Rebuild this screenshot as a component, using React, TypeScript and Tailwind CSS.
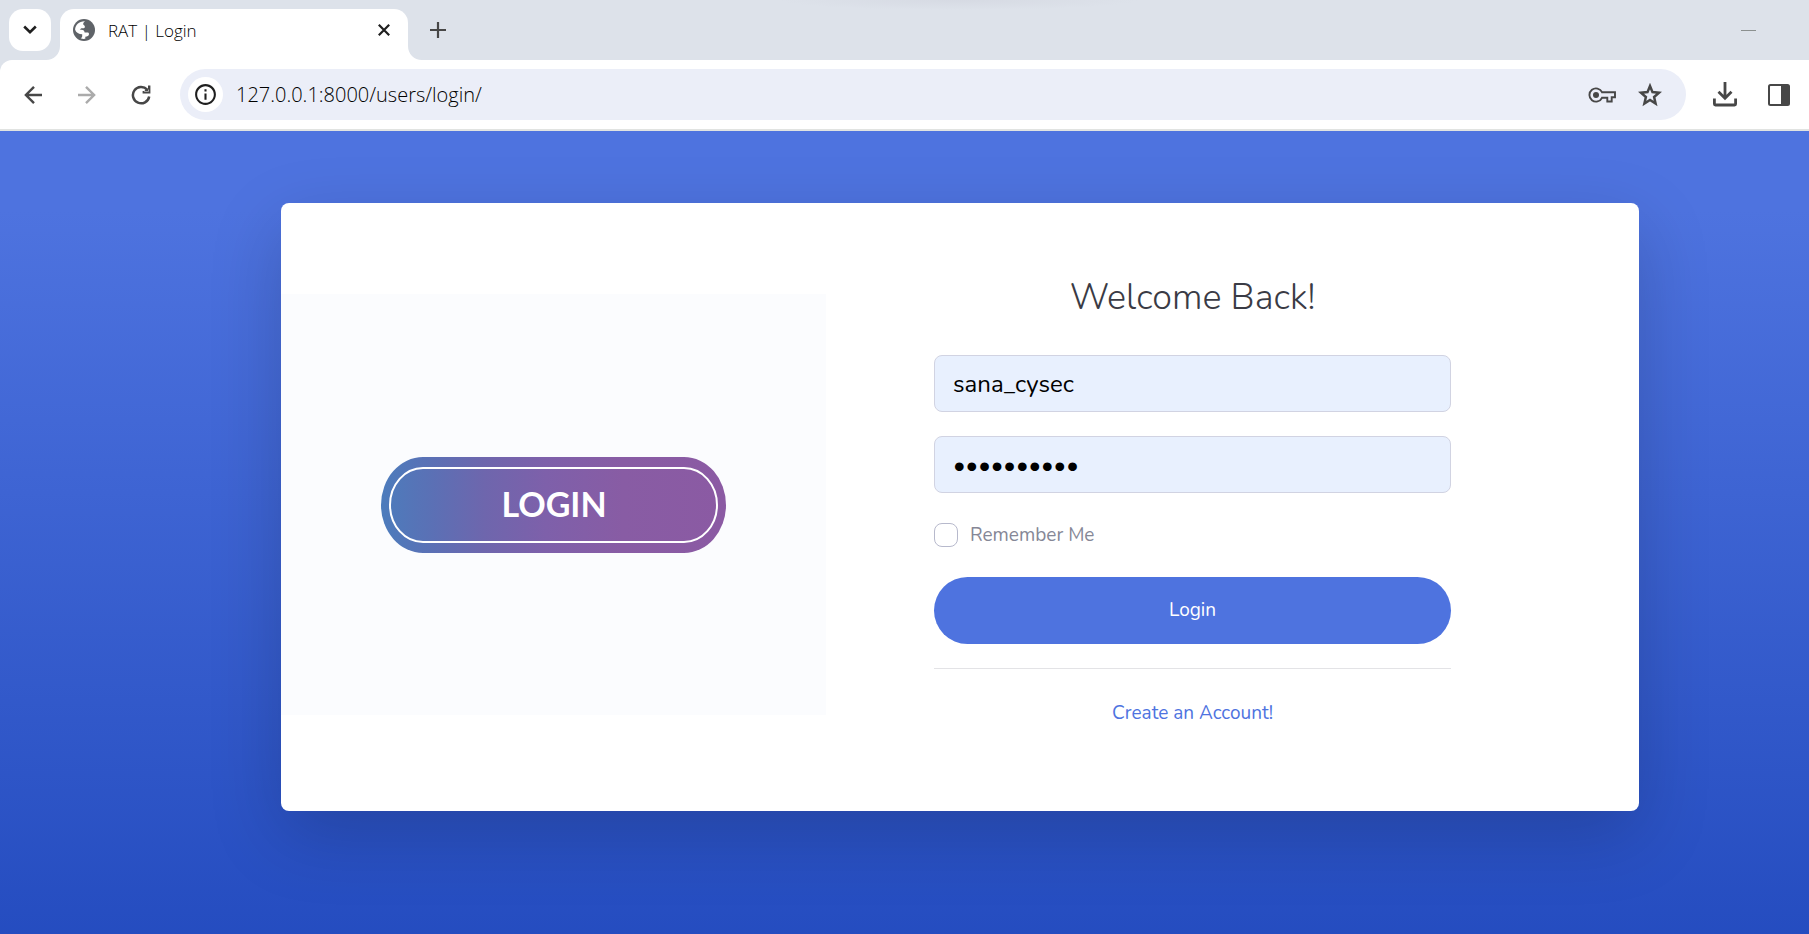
import type { ReactNode } from "react";
import { MdInfoOutline } from "react-icons/md";

function IconButton({ label, className = "", children }: { label: string; className?: string; children: ReactNode }) {
  return (
    <button type="button" aria-label={label} className={`flex shrink-0 items-center justify-center ${className}`}>
      {children}
    </button>
  );
}

function ArrowIcon({ className = "" }: { className?: string }) {
  return (
    <svg className={className} width="18" height="18" viewBox="0 0 18 18" fill="none" stroke="currentColor" strokeWidth="2.4">
      <path d="M18 9H2M10 .9 1.900 9l8.100 8.100" />
    </svg>
  );
}

function TabStrip() {
  return (
    <div className="flex h-15 items-end bg-[#dde2ea] bg-[radial-gradient(180px_10px_at_53%_0,#d6dae3_0%,#dde2ea_100%)]">
      <IconButton label="Search tabs" className="mb-[9px] ml-[9px] size-[42px] rounded-[14px] bg-white text-[#1f1f1f]">
        <svg width="14" height="10" viewBox="0 0 14 10" fill="none" stroke="currentColor" strokeWidth="2.6">
          <path d="M1.2 1.500 7 7.100l5.800-5.600" />
        </svg>
      </IconButton>
      <div className="flex grow items-end">
        <svg className="-ml-[5px] shrink-0" width="14" height="14" viewBox="0 0 14 14" fill="#fff">
          <path d="M14 0v14H0C8 14 14 8 14 0Z" />
        </svg>
        <div className="flex h-[51px] w-[348px] items-center rounded-t-[14px] bg-white pr-4 pb-[9px] pl-[13px]">
          <svg width="22" height="22" viewBox="0 0 22 22">
            <circle cx="11" cy="11" r="11" fill="#5f6368" />
            <path
              d="M12.200 2.200C10.900 3 10.200 3.900 10.200 5c0 1.300 1.700 1.300 1.700 2.700 0 1.100-.9 1.600-2 1.600H8.500c-1 0-.8 1.500-1.900 1.500H2.100C2.200 5.800 6.200 1.900 12.200 2.200Z M2.100 10.800H8.500c1.900 0 3.100 1.200 3.100 2.700H14.500c1 0 1.500.7 1.500 1.600 0 1.800-1.700 2.600-3.700 2.600v2.100c-1.600.3-3.200.1-4.600-.5 1.200-.5 1.500-1.300 1.500-2.300V15.200C6 15.200 3 13.800 2.100 10.800Z"
              fill="#fff"
            />
          </svg>
          <span className="ml-[13px] grow pt-0.5 font-['Open_Sans','Noto_Sans',sans-serif] text-[17px] leading-6 font-light text-black">
            RAT | Login
          </span>
          <IconButton label="Close tab" className="size-4 text-[#1f1f1f]">
            <svg width="12" height="12" viewBox="0 0 12 12" stroke="currentColor" strokeWidth="2.200">
              <path d="M.8.8l10.400 10.400M11.200.8.8 11.200" />
            </svg>
          </IconButton>
        </div>
        <svg className="shrink-0" width="14" height="14" viewBox="0 0 14 14" fill="#fff">
          <path d="M0 0v14h14C6 14 0 8 0 0Z" />
        </svg>
        <IconButton label="New tab" className="mb-[18px] ml-1 size-6 text-[#474747]">
          <svg width="16" height="16" viewBox="0 0 16 16" stroke="currentColor" strokeWidth="2.200">
            <path d="M8 0v16M0 8h16" />
          </svg>
        </IconButton>
      </div>
      <IconButton label="Minimize" className="mr-[53px] mb-[22px] h-4 w-[15px]">
        <span className="h-px w-full bg-[#8b908f]" />
      </IconButton>
    </div>
  );
}

function Toolbar() {
  return (
    <div className="bg-[#dde2ea]">
      <div className="flex h-[71px] items-center rounded-tl-xl border-b-2 border-[#e1e3e1] bg-white pr-[19px] pl-5 text-[#474747]">
        <IconButton label="Back" className="size-[26px]">
          <ArrowIcon />
        </IconButton>
        <IconButton label="Forward" className="ml-7 size-[26px] text-[#ababab]">
          <ArrowIcon className="rotate-180" />
        </IconButton>
        <IconButton label="Reload" className="ml-7 size-[26px]">
          <svg width="20" height="20" viewBox="0 0 20 20">
            <path
              d="M16.200 4.600A8.200 8.200 0 1 0 18.200 11.500"
              fill="none"
              stroke="currentColor"
              strokeWidth="2.500"
            />
            <path d="M17 .6h2.400v7.800h-7.800V6.100H17Z M17.200 4.200 15.600 3.400 12.900 6.500h5Z" fill="currentColor" />
          </svg>
        </IconButton>
        <div className="ml-[26px] flex h-[51px] grow items-center rounded-full bg-[#ebeef8] pr-6 pl-2">
          <IconButton label="View site information" className="size-[35px] rounded-full bg-white text-[#1f1f1f]">
            <MdInfoOutline size={25} />
          </IconButton>
          <input
            aria-label="Address"
            defaultValue="127.0.0.1:8000/users/login/"
            className="ml-[13px] min-w-0 grow bg-transparent font-['Open_Sans','Noto_Sans',sans-serif] text-[20px] leading-7 font-light text-black outline-none"
          />
          <IconButton label="Saved passwords" className="h-7 w-7">
            <svg width="28" height="16" viewBox="0 0 28 16" fill="none" stroke="currentColor" strokeWidth="1.900">
              <path d="M14 5.200A6.600 6.600 0 1 0 14 10.800H19.300V14.500H23.700V10.300H27V5.200Z" />
              <circle cx="8" cy="8" r="3" fill="currentColor" stroke="none" />
            </svg>
          </IconButton>
          <IconButton label="Bookmark this page" className="ml-[22px] size-6">
            <svg width="24" height="24" viewBox="0 0 24 24" fill="none" stroke="currentColor" strokeWidth="2.500">
              <path d="M12 3l2.500 6.100 6.600.6-5 4.300 1.500 6.500L12 17l-5.600 3.500 1.500-6.500-5-4.300 6.600-.6Z" />
            </svg>
          </IconButton>
        </div>
        <IconButton label="Downloads" className="ml-[27px] size-6">
          <svg width="24" height="25" viewBox="0 0 24 25" fill="none" stroke="currentColor" strokeWidth="2.800">
            <path d="M12 0v15.500M5.500 9.800 12 16.200l6.500-6.400M1.400 16.500v5.500a1 1 0 0 0 1 1h19.200a1 1 0 0 0 1-1v-5.500" />
          </svg>
        </IconButton>
        <IconButton label="Side panel" className="ml-[31px] size-[22px]">
          <svg width="22" height="22" viewBox="0 0 22 22">
            <rect x="1" y="1" width="20" height="20" rx="1.500" fill="#fff" stroke="currentColor" strokeWidth="2" />
            <path d="M13 1h8v20h-8z" fill="currentColor" />
          </svg>
        </IconButton>
      </div>
    </div>
  );
}

function LoginArtwork() {
  return (
    <svg className="h-auto w-full" viewBox="0 0 545 421" role="img" aria-label="Login">
      <defs>
        <linearGradient id="pill" x1="0" x2="1" y1="0" y2="0">
          <stop offset="0" stopColor="#4c7cbc" />
          <stop offset="0.15" stopColor="#5b70b5" />
          <stop offset="0.3" stopColor="#6e66ad" />
          <stop offset="0.48" stopColor="#7e60aa" />
          <stop offset="0.7" stopColor="#885ca4" />
          <stop offset="1" stopColor="#8b5aa3" />
        </linearGradient>
      </defs>
      <rect width="545" height="421" fill="#fbfcfe" />
      <rect x="100" y="163" width="345" height="96" rx="42" ry="48" fill="url(#pill)" />
      <rect x="109" y="174" width="327" height="74" rx="33" ry="37" fill="none" stroke="#fff" strokeWidth="2" />
      <text x="273" y="223" textAnchor="middle" fill="#fff" className="font-['Lato',sans-serif] text-[34px] font-bold">
        LOGIN
      </text>
    </svg>
  );
}

function LoginForm() {
  const field =
    "block h-[57px] w-full rounded-lg border border-[#d1d3e2] bg-[#e8f0fe] px-[18px] text-black outline-none";
  return (
    <form className="flex flex-col pt-[73px] pr-47 pb-[82px] pl-27" onSubmit={(event) => event.preventDefault()}>
      <h1 className="mb-[35px] text-center text-[36px] leading-[44px] font-light text-[#3a3b45]">Welcome Back!</h1>
      <input aria-label="Username" defaultValue="sana_cysec" className={`${field} text-[24px]`} />
      <input
        aria-label="Password"
        type="password"
        defaultValue="sanacysec1"
        className={`${field} mt-6 text-[24px]`}
      />
      <label className="mt-7 flex h-7 items-center gap-3 text-[19px] leading-7 text-[#858796]">
        <input
          type="checkbox"
          className="size-6 appearance-none rounded-lg border border-[#b7b9cc] bg-white checked:bg-[#4e73df]"
        />
        Remember Me
      </label>
      <button type="submit" className="mt-7 h-[67px] rounded-full bg-[#4e73df] text-[19px] text-white">
        Login
      </button>
      <hr className="mt-6 border-[#e3e3e6]" />
      <a href="#register" className="mt-7 self-center text-[19px] leading-8 text-[#4e73df]">
        Create an Account!
      </a>
    </form>
  );
}

export default function App() {
  return (
    <div className="flex min-h-screen flex-col">
      <header>
        <TabStrip />
        <Toolbar />
      </header>
      <main className="grow bg-[linear-gradient(180deg,#4e73df_10%,#224abe_106%)] pt-18 pr-[170px] pb-[123px] pl-[281px] font-['Nunito','Lato',sans-serif]">
        <section className="grid grid-cols-[545fr_813fr] rounded-lg bg-white shadow-[0_24px_72px_rgba(0,0,0,0.175)]">
          <div className="pt-[91px]">
            <LoginArtwork />
          </div>
          <LoginForm />
        </section>
      </main>
    </div>
  );
}
